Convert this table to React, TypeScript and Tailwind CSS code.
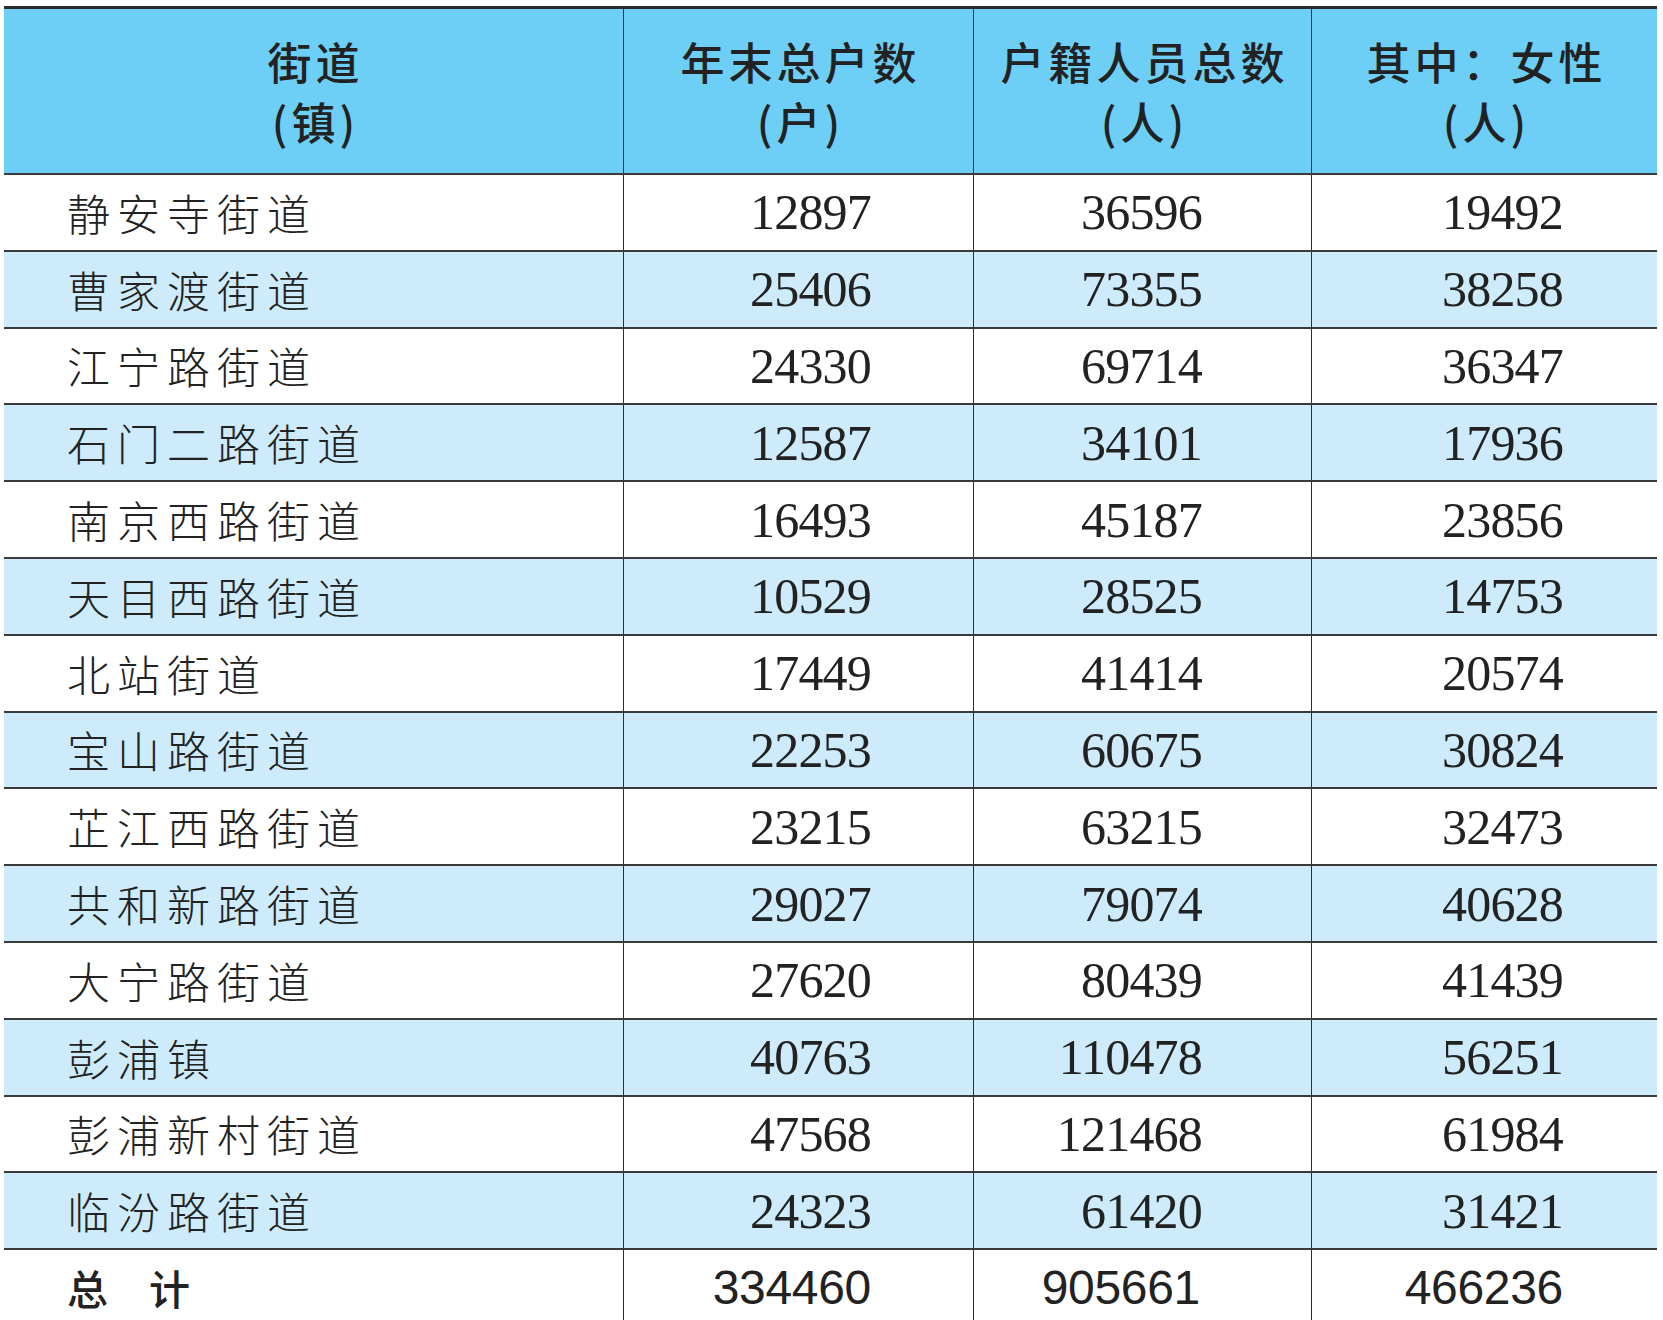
import React from 'react'

interface Row {
  name: string
  households: string
  people: string
  female: string
}

const rows: Row[] = [
  { name: '静安寺街道', households: '12897', people: '36596', female: '19492' },
  { name: '曹家渡街道', households: '25406', people: '73355', female: '38258' },
  { name: '江宁路街道', households: '24330', people: '69714', female: '36347' },
  { name: '石门二路街道', households: '12587', people: '34101', female: '17936' },
  { name: '南京西路街道', households: '16493', people: '45187', female: '23856' },
  { name: '天目西路街道', households: '10529', people: '28525', female: '14753' },
  { name: '北站街道', households: '17449', people: '41414', female: '20574' },
  { name: '宝山路街道', households: '22253', people: '60675', female: '30824' },
  { name: '芷江西路街道', households: '23215', people: '63215', female: '32473' },
  { name: '共和新路街道', households: '29027', people: '79074', female: '40628' },
  { name: '大宁路街道', households: '27620', people: '80439', female: '41439' },
  { name: '彭浦镇', households: '40763', people: '110478', female: '56251' },
  { name: '彭浦新村街道', households: '47568', people: '121468', female: '61984' },
  { name: '临汾路街道', households: '24323', people: '61420', female: '31421' },
]

const gridCols = 'grid grid-cols-[619px_350px_338px_346px]'
const cjk = "font-['Noto_Sans_CJK_SC',sans-serif]"
const serif = "font-['Liberation_Serif','Times_New_Roman',serif]"

function HeaderCell({ top, bottom, first }: { top: string; bottom: string; first?: boolean }) {
  return (
    <div
      className={`flex flex-col items-center justify-center ${first ? '' : 'border-l border-[#333]'}`}
    >
      <span className="text-[44px] leading-[60px] font-medium tracking-[4px] pl-[4px]">{top}</span>
      <span className="text-[44px] leading-[60px] font-medium tracking-[4px] pl-[4px]">{bottom}</span>
    </div>
  )
}

export default function App() {
  return (
    <div className={`w-[1663px] h-[1320px] overflow-hidden bg-white pt-[6px] pl-[4px] text-[#222] ${cjk}`}>
      <div className="w-[1653px] border-t-[3px] border-[#2b2b2b]">
        {/* Header */}
        <div className={`${gridCols} h-[164px] bg-[#6dcff6]`}>
          <HeaderCell top="街道" bottom="(镇)" first />
          <HeaderCell top="年末总户数" bottom="(户)" />
          <HeaderCell top="户籍人员总数" bottom="(人)" />
          <HeaderCell top="其中：女性" bottom="(人)" />
        </div>

        {/* Body */}
        {rows.map((row, i) => (
          <div
            key={row.name}
            className={`${gridCols} h-[76.8px] border-t-2 border-[#3a3a3a] ${i % 2 === 1 ? 'bg-[#cdebfa]' : 'bg-white'}`}
          >
            <div className="flex items-center pl-[63px]">
              <span className="text-[43px] leading-none font-light tracking-[7px]">{row.name}</span>
            </div>
            <div className={`flex items-center justify-end pr-[102px] border-l border-[#2e2e2e] ${serif}`}>
              <span className="text-[50px] leading-none tracking-[-0.8px]">{row.households}</span>
            </div>
            <div className={`flex items-center justify-end pr-[109px] border-l border-[#2e2e2e] ${serif}`}>
              <span className="text-[50px] leading-none tracking-[-0.8px]">{row.people}</span>
            </div>
            <div className={`flex items-center justify-end pr-[94px] border-l border-[#2e2e2e] ${serif}`}>
              <span className="text-[50px] leading-none tracking-[-0.8px]">{row.female}</span>
            </div>
          </div>
        ))}

        {/* Total */}
        <div className={`${gridCols} h-[76.8px] border-t-2 border-[#3a3a3a] bg-white`}>
          <div className="flex items-center pl-[63px]">
            <span className="text-[41px] leading-none font-medium">总　计</span>
          </div>
          {['334460', '905661', '466236'].map((v, i) => (
            <div
              key={v}
              className={`flex items-center justify-end border-l border-[#2e2e2e] font-['Liberation_Sans',Arial,sans-serif] ${
                i === 0 ? 'pr-[102px]' : i === 1 ? 'pr-[111px]' : 'pr-[94px]'
              }`}
            >
              <span className="text-[48px] leading-none tracking-[-0.3px]">{v}</span>
            </div>
          ))}
        </div>
      </div>
    </div>
  )
}
